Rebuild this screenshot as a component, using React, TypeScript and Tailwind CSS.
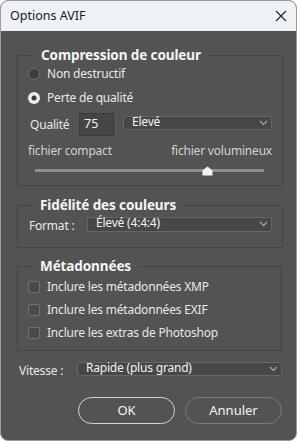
import React from "react";

const font = { fontFamily: '"Noto Sans", "Open Sans", sans-serif' };

function Chevron() {
  return (
    <svg width="9" height="6" viewBox="0 0 9 6" className="shrink-0">
      <path d="M1 1 L4.5 4.5 L8 1" fill="none" stroke="#a8a8a8" strokeWidth="1.1" />
    </svg>
  );
}

function Select({ label, className }: { label: string; className: string }) {
  return (
    <div
      className={
        "flex items-center justify-between h-[14px] bg-[#474747] border border-[#666666] rounded-[2px] pl-[8px] pr-[3px] text-[12px] tracking-[-0.2px] text-[#f2f2f2] leading-none " +
        className
      }
    >
      <span className="-mt-[2px]">{label}</span>
      <Chevron />
    </div>
  );
}

function Checkbox({ label }: { label: string }) {
  return (
    <div className="flex items-center h-[23px]">
      <div className="w-[12px] h-[12px] shrink-0 rounded-[2px] bg-[#4a4a4a] border border-[#727272] ml-[10px] mr-[7px]" />
      <span className="text-[12px] tracking-[-0.2px] text-[#e8e8e8]">{label}</span>
    </div>
  );
}

const legendCls = "px-[7px] text-[13.5px] font-bold text-[#f5f5f5] leading-[17px] tracking-[-0.1px]";
const txt = "text-[12px] tracking-[-0.2px] text-[#e8e8e8]";

export default function App() {
  return (
    <div className="w-[299px] h-[443px] bg-white" style={font}>
      <div className="w-[297px] h-[441px] rounded-[8px] border border-[#9c9c9c] overflow-hidden flex flex-col bg-[#535353]">
        <div className="h-[30px] shrink-0 bg-[#eef2f7] flex items-center justify-between pl-[9px] pr-[9px]">
          <span className="text-[12.5px] text-[#1b1b1b]">Options AVIF</span>
          <svg width="12" height="12" viewBox="0 0 12 12">
            <path d="M1 1 L11 11 M11 1 L1 11" stroke="#222" strokeWidth="1.1" />
          </svg>
        </div>
        <div className="flex flex-col pl-[16px] pt-[16px]">
          <fieldset className="w-[265px] border border-[#454545] pl-[10px] pr-[10px] pb-[8px]">
            <legend className={"ml-[6px] " + legendCls}>Compression de couleur</legend>
            <div className="flex items-center h-[20px]">
              <svg width="12" height="12" viewBox="0 0 12 12" className="shrink-0 mr-[7px]">
                <circle cx="6" cy="6" r="5.5" fill="#3d3d3d" stroke="#6e6e6e" strokeWidth="1" />
              </svg>
              <span className={txt}>Non destructif</span>
            </div>
            <div className="flex items-center h-[20px] mt-[4px]">
              <svg width="12" height="12" viewBox="0 0 12 12" className="shrink-0 mr-[7px]">
                <circle cx="6" cy="6" r="6" fill="#ececec" />
                <circle cx="6" cy="6" r="2.5" fill="#3a3a3a" />
              </svg>
              <span className={txt}>Perte de qualité</span>
            </div>
            <div className="flex items-center mt-[5px] h-[23px]">
              <span className={txt + " ml-[2px] w-[49px]"}>Qualité</span>
              <div className="w-[35px] h-[23px] bg-[#454545] border border-[#3c3c3c] flex items-center pl-[4px] text-[12.5px] text-[#f2f2f2]">
                75
              </div>
              <Select label="Elevé" className="ml-[9px] w-[149px] -mt-[4px]" />
            </div>
            <div className="flex justify-between mt-[7px] h-[16px] text-[12px] tracking-[-0.2px] text-[#d2d2d2] leading-[16px]">
              <span>fichier compact</span>
              <span>fichier volumineux</span>
            </div>
            <div className="relative mt-[4px] h-[14px]">
              <div className="absolute left-[7px] w-[229px] top-[6px] h-[3px] bg-[#8e8e8e]" />
              <svg className="absolute left-[174px] top-[3px]" width="11" height="10" viewBox="0 0 11 10">
                <path d="M5.5 0.5 L10.5 4.5 L10.5 9.5 L0.5 9.5 L0.5 4.5 Z" fill="#f4f4f4" />
              </svg>
            </div>
          </fieldset>

          <fieldset className="w-[265px] mt-[11px] border border-[#454545] pl-[10px] pr-[10px] pb-[13px]">
            <legend className={"ml-[5px] " + legendCls}>Fidélité des couleurs</legend>
            <div className="flex items-center h-[20px]">
              <span className={txt + " ml-[1px] w-[58px] mt-[4px]"}>Format :</span>
              <Select label="Élevé (4:4:4)" className="w-[185px] h-[15px]" />
            </div>
          </fieldset>

          <fieldset className="w-[265px] mt-[10px] border border-[#454545] pr-[10px] pb-[6px]">
            <legend className={"ml-[15px] " + legendCls}>Métadonnées</legend>
            <div>
              <Checkbox label="Inclure les métadonnées XMP" />
              <Checkbox label="Inclure les métadonnées EXIF" />
              <Checkbox label="Inclure les extras de Photoshop" />
            </div>
          </fieldset>

          <div className="flex items-center mt-[11px] h-[14px] w-[265px]">
            <span className={txt + " ml-[2px] w-[58px] mt-[4px]"}>Vitesse :</span>
            <Select label="Rapide (plus grand)" className="w-[205px]" />
          </div>

          <div className="flex justify-end gap-[10px] mt-[21px] w-[265px]">
            <button className="w-[97px] h-[27px] rounded-full border-[1.5px] border-[#d4d4d4] text-[13px] text-[#f5f5f5] bg-[#535353]">
              OK
            </button>
            <button className="w-[97px] h-[27px] rounded-full border border-[#7c7c7c] text-[13px] text-[#f5f5f5] bg-[#535353]">
              Annuler
            </button>
          </div>
        </div>
      </div>
    </div>
  );
}
